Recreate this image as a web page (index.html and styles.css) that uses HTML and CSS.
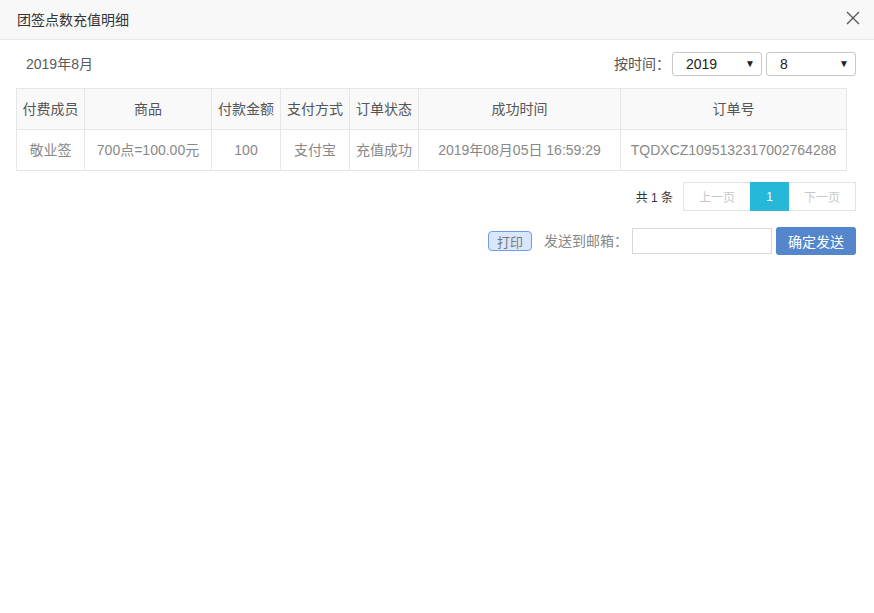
FILE: index.html
```html
<!DOCTYPE html>
<html lang="zh">
<head>
<meta charset="utf-8">
<title>团签点数充值明细</title>
<link rel="stylesheet" href="styles.css">
</head>
<body>
<div class="dialog">
  <div class="dlg-head">
    <span class="dlg-title">团签点数充值明细</span>
    <svg class="close" width="14" height="14" viewBox="0 0 14 14"><path d="M1 1L13 13M13 1L1 13" stroke="#555" stroke-width="1.3" fill="none"/></svg>
  </div>
  <div class="dlg-body">
    <div class="toolbar">
      <span class="period">2019年8月</span>
      <div class="filter">
        <span class="filter-label">按时间：</span>
        <div class="sel sel-year"><span>2019</span><span class="arrow">▼</span></div>
        <div class="sel sel-month"><span>8</span><span class="arrow">▼</span></div>
      </div>
    </div>
    <table class="grid">
      <colgroup>
        <col class="c1"><col class="c2"><col class="c3"><col class="c4"><col class="c5"><col class="c6"><col class="c7">
      </colgroup>
      <thead>
        <tr><th>付费成员</th><th>商品</th><th>付款金额</th><th>支付方式</th><th>订单状态</th><th>成功时间</th><th>订单号</th></tr>
      </thead>
      <tbody>
        <tr><td>敬业签</td><td>700点=100.00元</td><td>100</td><td>支付宝</td><td>充值成功</td><td>2019年08月05日 16:59:29</td><td>TQDXCZ1095132317002764288</td></tr>
      </tbody>
    </table>
    <div class="pager">
      <span class="total">共 1 条</span>
      <div class="pages">
        <span class="pg pg-prev">上一页</span>
        <span class="pg pg-cur">1</span>
        <span class="pg pg-next">下一页</span>
      </div>
    </div>
    <div class="send-row">
      <span class="print-btn">打印</span>
      <span class="mail-label">发送到邮箱：</span>
      <input class="mail-input" type="text">
      <span class="send-btn">确定发送</span>
    </div>
  </div>
</div>
</body>
</html>
```
FILE: styles.css
```css
* { box-sizing: border-box; }
html, body { margin: 0; padding: 0; background: #fff; }
body {
  font-family: "Liberation Sans", "Noto Sans CJK SC", sans-serif;
  font-size: 14px;
  color: #555;
  width: 874px;
  height: 613px;
  text-spacing-trim: space-all;
}
.dlg-head {
  height: 40px;
  background: #f8f8f8;
  border-bottom: 1px solid #e8e8e8;
  display: flex;
  align-items: center;
  justify-content: space-between;
  padding: 0 14px 0 17px;
}
.dlg-title { font-size: 14px; color: #333; line-height: 20px; }
.close { display: block; margin-top: -3px; }
.dlg-body { padding: 0 18px 0 16px; }
.toolbar {
  display: flex;
  justify-content: space-between;
  align-items: center;
  padding-top: 12px;
  height: 35px;
}
.period { padding-left: 10px; color: #5a5a5a; line-height: 20px; }
.filter { display: flex; align-items: center; }
.filter-label { color: #555; margin-right: 2px; line-height: 20px; }
.sel {
  height: 24px;
  border: 1px solid #c8c8c8;
  border-radius: 3px;
  display: flex;
  align-items: center;
  justify-content: space-between;
  padding: 0 6px 0 13px;
  color: #222;
  line-height: 20px;
}
.sel-year { width: 90px; }
.sel-month { width: 90px; margin-left: 4px; }
.arrow { font-size: 10px; color: #222; }
.grid {
  margin-top: 13px;
  border-collapse: collapse;
  table-layout: fixed;
  width: 830px;
}
.c1 { width: 68px; } .c2 { width: 127px; } .c3 { width: 69px; } .c4 { width: 69px; }
.c5 { width: 69px; } .c6 { width: 202px; } .c7 { width: 226px; }
.grid th, .grid td {
  border: 1px solid #e6e6e6;
  height: 41px;
  padding: 0;
  text-align: center;
  font-weight: normal;
  white-space: nowrap;
  line-height: 20px;
}
.grid th { background: #f9f9f9; color: #555; }
.grid td { color: #888; }
.pager {
  display: flex;
  justify-content: flex-end;
  align-items: center;
  margin-top: 11px;
  height: 29px;
}
.total { font-size: 12px; color: #333; margin-right: 10px; }
.pages { display: flex; }
.pg {
  height: 29px;
  display: flex;
  align-items: center;
  justify-content: center;
  font-size: 12px;
  border: 1px solid #e2e2e2;
}
.pg-prev { width: 67px; color: #c8c8c8; border-right: none; }
.pg-cur { width: 39px; background: #27b7d8; border-color: #27b7d8; color: #fff; }
.pg-next { width: 67px; color: #c8c8c8; border-left: none; }
.send-row {
  display: flex;
  justify-content: flex-end;
  align-items: center;
  margin-top: 16px;
  height: 28px;
}
.print-btn {
  width: 44px;
  height: 20px;
  background: #dae7fb;
  border: 1px solid #6f9de2;
  border-radius: 4px;
  color: #777;
  font-size: 13px;
  display: flex;
  align-items: center;
  justify-content: center;
  margin-right: 12px;
}
.mail-label { color: #888; line-height: 20px; margin-right: 4px; }
.mail-input {
  width: 140px;
  height: 26px;
  border: 1px solid #d8d8d8;
  margin: 0 4px 0 0;
  padding: 0 4px;
  outline: none;
}
.send-btn {
  width: 80px;
  height: 28px;
  background: #5586cc;
  border-radius: 3px;
  color: #fff;
  display: flex;
  align-items: center;
  justify-content: center;
}
```
